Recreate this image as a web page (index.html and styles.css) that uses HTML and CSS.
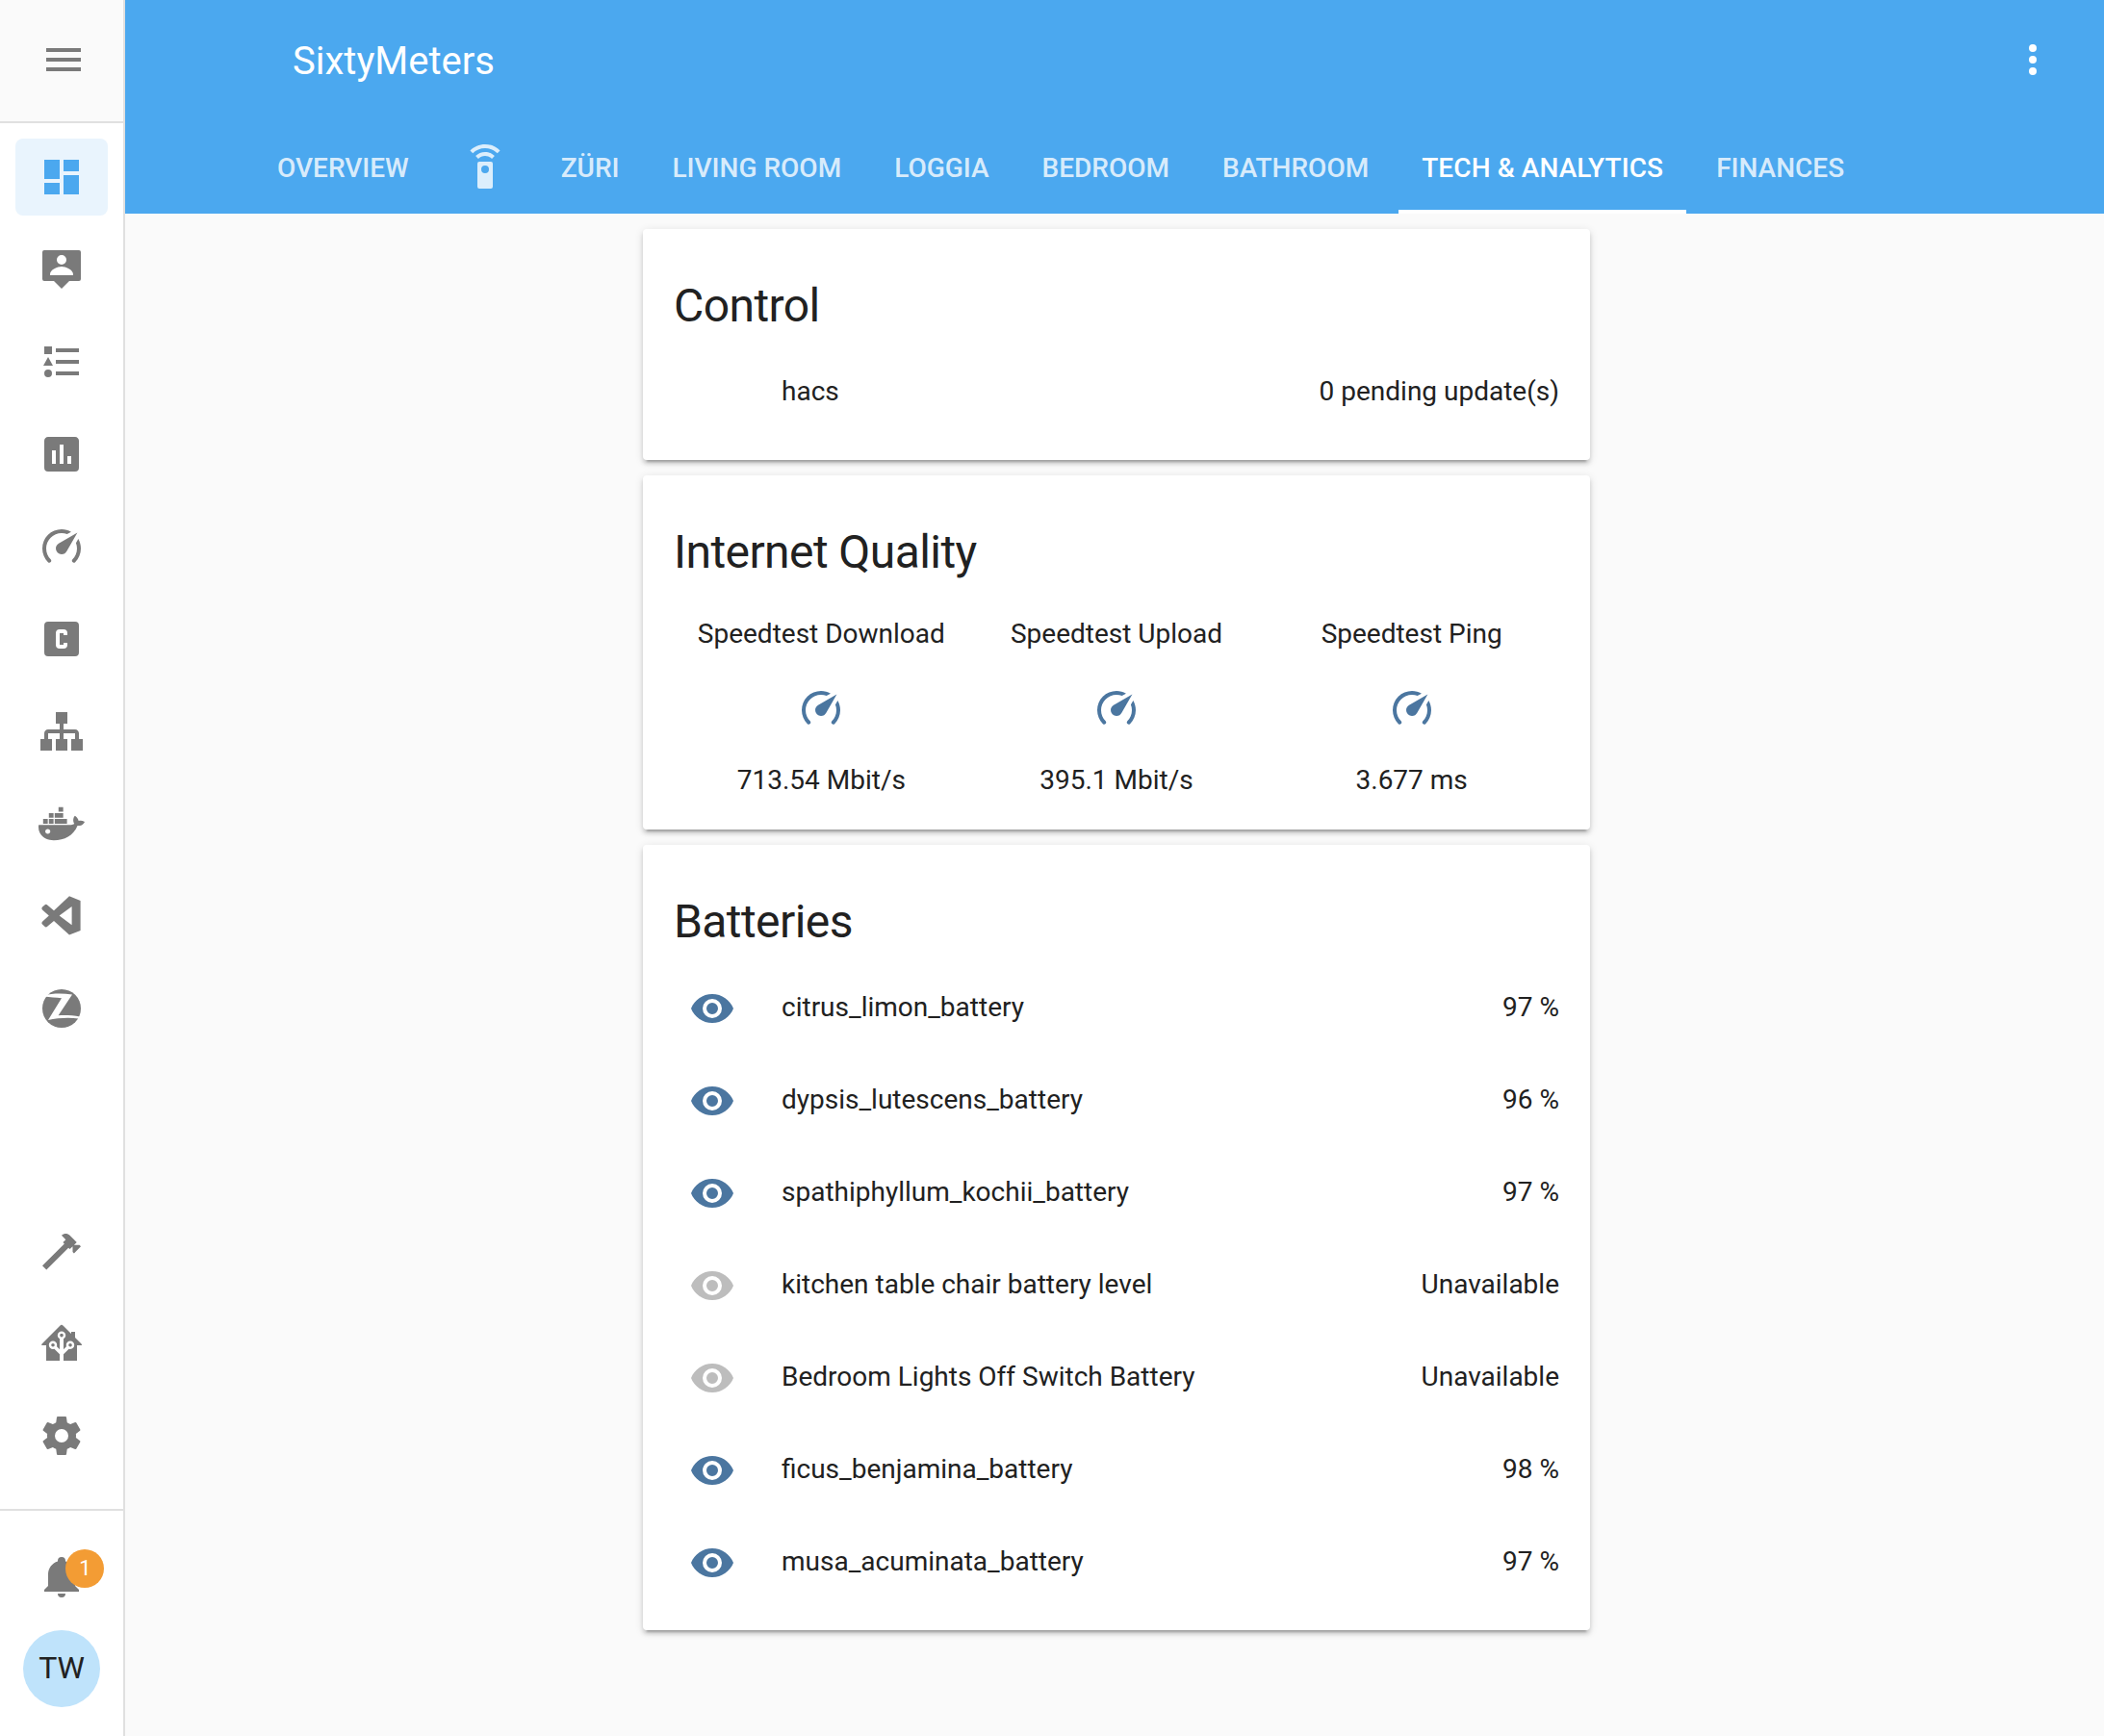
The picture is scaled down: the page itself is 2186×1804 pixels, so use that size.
FILE: index.html
```html
<!DOCTYPE html>
<html lang="en">
<head>
    <meta charset="UTF-8">
    <meta name="viewport" content="width=device-width, initial-scale=1.0">
    <title>SixtyMeters</title>
    <link rel="stylesheet" href="styles.css">
</head>
<body>

    <!-- Shared icons -->
    <svg class="sprite" aria-hidden="true">
        <symbol id="i-eye" viewBox="0 0 24 24"><path d="M12,9A3,3 0 0,0 9,12A3,3 0 0,0 12,15A3,3 0 0,0 15,12A3,3 0 0,0 12,9M12,17A5,5 0 0,1 7,12A5,5 0 0,1 12,7A5,5 0 0,1 17,12A5,5 0 0,1 12,17M12,4.5C7,4.5 2.73,7.61 1,12C2.73,16.39 7,19.5 12,19.5C17,19.5 21.27,16.39 23,12C21.27,7.61 17,4.5 12,4.5Z"/></symbol>
        <symbol id="i-speed" viewBox="0 0 24 24"><path d="M12,16A3,3 0 0,1 9,13C9,11.88 9.61,10.9 10.5,10.39L20.21,4.77L14.68,14.35C14.18,15.33 13.17,16 12,16M12,3C13.81,3 15.5,3.5 16.97,4.32L14.87,5.53C14,5.19 13,5 12,5A8,8 0 0,0 4,13C4,15.21 4.89,17.21 6.34,18.65H6.35C6.74,19.04 6.74,19.67 6.35,20.06C5.96,20.45 5.32,20.45 4.93,20.07V20.07C3.12,18.26 2,15.76 2,13A10,10 0 0,1 12,3M22,13C22,15.76 20.88,18.26 19.07,20.07V20.07C18.68,20.45 18.05,20.45 17.66,20.06C17.27,19.67 17.27,19.04 17.66,18.65V18.65C19.11,17.2 20,15.21 20,13C20,12 19.81,11 19.46,10.1L20.67,8C21.5,9.5 22,11.18 22,13Z"/></symbol>
    </svg>

    <!-- Sidebar -->
    <aside class="sidebar">
        <div class="menu">
            <svg class="icon" viewBox="0 0 24 24"><path d="M3,6H21V8H3V6M3,11H21V13H3V11M3,16H21V18H3V16Z"/></svg>
        </div>
        <nav class="nav">
            <a class="nav-item active"><svg class="icon" viewBox="0 0 24 24"><path d="M13,3V9H21V3M13,21H21V11H13M3,21H11V15H3M3,13H11V3H3V13Z"/></svg></a>
            <a class="nav-item"><svg class="icon" viewBox="0 0 24 24"><path fill-rule="evenodd" d="M3 2H21A1 1 0 0 1 22 3V17A1 1 0 0 1 21 18H16L12 22L8 18H3A1 1 0 0 1 2 17V3A1 1 0 0 1 3 2ZM12 4.5A2.5 2.5 0 1 0 12 9.5A2.5 2.5 0 1 0 12 4.5ZM6 15H18V14.5C18 12 14 10.5 12 10.5C10 10.5 6 12 6 14.5Z"/></svg></a>
            <a class="nav-item"><svg class="icon" viewBox="0 0 24 24"><path d="M3 4H7V8H3ZM9 5H21V7H9ZM5 9.5L7.5 14H2.5ZM9 11H21V13H9ZM5 16A2 2 0 1 1 5 20A2 2 0 1 1 5 16ZM9 17H21V19H9Z"/></svg></a>
            <a class="nav-item"><svg class="icon" viewBox="0 0 24 24"><path d="M17,17H15V13H17M13,17H11V7H13M9,17H7V10H9M19,3H5C3.89,3 3,3.89 3,5V19A2,2 0 0,0 5,21H19A2,2 0 0,0 21,19V5C21,3.89 20.1,3 19,3Z"/></svg></a>
            <a class="nav-item"><svg class="icon"><use href="#i-speed"/></svg></a>
            <a class="nav-item"><svg class="icon" viewBox="0 0 24 24"><path fill-rule="evenodd" d="M11,7A2,2 0 0,0 9,9V15A2,2 0 0,0 11,17H13A2,2 0 0,0 15,15V14H13V15H11V9H13V10H15V9A2,2 0 0,0 13,7H11M5,3H19A2,2 0 0,1 21,5V19A2,2 0 0,1 19,21H5A2,2 0 0,1 3,19V5A2,2 0 0,1 5,3Z"/></svg></a>
            <a class="nav-item"><svg class="icon" viewBox="0 0 24 24"><path d="M9,2V8H11V11H5C3.89,11 3,11.89 3,13V16H1V22H7V16H5V13H11V16H9V22H15V16H13V13H19V16H17V22H23V16H21V13C21,11.89 20.11,11 19,11H13V8H15V2H9Z"/></svg></a>
            <a class="nav-item"><svg class="icon" viewBox="0 0 24 24"><path d="M4.82,17.275c-.684,0-1.304-.56-1.304-1.24s.56-1.243,1.305-1.243c.748,0,1.31.56,1.31,1.242s-.622,1.24-1.31,1.24zm16.012-6.763c-.135-.992-.75-1.8-1.56-2.42l-.315-.25-.254.31c-.494.56-.69 1.553-.63 2.295.06.562.24 1.12.554 1.554-.25.14-.557.25-.81.37-.57.188-1.124.25-1.68.25H.097l-.06.37c-.12 1.182.06 2.42.562 3.54l.244.435v.06c1.5 2.483 4.17 3.6 7.078 3.6 5.594 0 10.182-2.42 12.357-7.633 1.425.062 2.864-.31 3.54-1.676l.18-.31-.3-.187c-.81-.494-1.92-.56-2.85-.31l-.018.002zm-8.008-.992h-2.428v2.42h2.43V9.518l-.002.003zm0-3.043h-2.428v2.42h2.43V6.48l-.002-.002zm0-3.104h-2.428v2.42h2.43v-2.42h-.002zm2.97 6.147H12.39v2.42h2.42V9.518zm-8.998 0H5.39v2.42h2.42v-2.42zm3.03 0H8.41v2.42h2.42v-2.42zm-6.03 0H2.4v2.42h2.428v-2.42zm6.03-3.043H8.41v2.42h2.42v-2.42zm-3.03 0H5.39v2.42h2.42v-2.42z"/></svg></a>
            <a class="nav-item"><svg class="icon" viewBox="0 0 24 24"><path fill-rule="evenodd" d="M17.3 16.6V7L10.8 11.8ZM16 1.6L21.8 4V19.5L16 21.8L8 14.5L4.6 17.4C4.2 17.8 3.6 17.8 3.2 17.4L2 16.3C1.6 15.9 1.6 15.3 2 14.9L5.4 11.8L2 8.7C1.6 8.3 1.6 7.7 2 7.3L3.2 6.2C3.6 5.8 4.2 5.8 4.6 6.2L8 9.1Z"/></svg></a>
            <a class="nav-item"><svg class="icon" viewBox="0 0 24 24"><circle cx="12" cy="12" r="10"/><path class="cutout" d="M3 5.2C7 4.2 12 4 17.5 4.8L10.3 15.6C14 15.4 18 15.6 21.5 16.2L20.8 17.2C16 16.6 10 16.8 5 18L12 6.6C9 6.4 6 6.3 3 5.8Z"/></svg></a>
        </nav>
        <div class="tools">
            <a class="tool-item"><svg class="icon" viewBox="0 0 24 24"><path d="M2 19.63L13.43 8.2L12.72 7.5L14.14 6.07L12 3.89C13.2 2.7 15.09 2.7 16.27 3.89L19.87 7.5L18.45 8.91H21.29L22 9.62L18.45 13.21L17.74 12.5V9.62L16.27 11.04L15.56 10.33L4.13 21.76L2 19.63Z"/></svg></a>
            <a class="tool-item"><svg class="icon" viewBox="0 0 24 24"><path d="M21.8,13H20V21H13V17.67L15.79,14.88L16.5,15C17.66,15 18.6,14.06 18.6,12.9C18.6,11.74 17.66,10.8 16.5,10.8A2.1,2.1 0 0,0 14.4,12.9L14.5,13.61L13,15.13V9.65C13.66,9.29 14.1,8.6 14.1,7.8A2.1,2.1 0 0,0 12,5.7A2.1,2.1 0 0,0 9.9,7.8C9.9,8.6 10.34,9.29 11,9.65V15.13L9.5,13.61L9.6,12.9A2.1,2.1 0 0,0 7.5,10.8A2.1,2.1 0 0,0 5.4,12.9A2.1,2.1 0 0,0 7.5,15L8.21,14.88L11,17.67V21H4V13H2.25C1.83,13 1.42,13 1.42,12.79C1.43,12.57 1.85,12.15 2.28,11.72L11,3C11.33,2.67 11.67,2.33 12,2.33C12.33,2.33 12.67,2.67 13,3L17,7V6H19V9L21.78,11.78C22.17,12.17 22.56,12.56 22.56,12.78C22.56,13 22.18,13 21.8,13M7.5,12A0.9,0.9 0 0,1 8.4,12.9A0.9,0.9 0 0,1 7.5,13.8A0.9,0.9 0 0,1 6.6,12.9A0.9,0.9 0 0,1 7.5,12M16.5,12C17,12 17.4,12.4 17.4,12.9C17.4,13.4 17,13.8 16.5,13.8A0.9,0.9 0 0,1 15.6,12.9A0.9,0.9 0 0,1 16.5,12M12,6.9C12.5,6.9 12.9,7.3 12.9,7.8C12.9,8.3 12.5,8.7 12,8.7C11.5,8.7 11.1,8.3 11.1,7.8C11.1,7.3 11.5,6.9 12,6.9Z"/></svg></a>
            <a class="tool-item"><svg class="icon" viewBox="0 0 24 24"><path d="M12,15.5A3.5,3.5 0 0,1 8.5,12A3.5,3.5 0 0,1 12,8.5A3.5,3.5 0 0,1 15.5,12A3.5,3.5 0 0,1 12,15.5M19.43,12.97C19.47,12.65 19.5,12.33 19.5,12C19.5,11.67 19.47,11.34 19.43,11L21.54,9.37C21.73,9.22 21.78,8.95 21.66,8.73L19.66,5.27C19.54,5.05 19.27,4.96 19.05,5.05L16.56,6.05C16.04,5.66 15.5,5.32 14.87,5.07L14.5,2.42C14.46,2.18 14.25,2 14,2H10C9.75,2 9.54,2.18 9.5,2.42L9.13,5.07C8.5,5.32 7.96,5.66 7.44,6.05L4.95,5.05C4.73,4.96 4.46,5.05 4.34,5.27L2.34,8.73C2.21,8.95 2.27,9.22 2.46,9.37L4.57,11C4.53,11.34 4.5,11.67 4.5,12C4.5,12.33 4.53,12.65 4.57,12.97L2.46,14.63C2.27,14.78 2.21,15.05 2.34,15.27L4.34,18.73C4.46,18.95 4.73,19.03 4.95,18.95L7.44,17.94C7.96,18.34 8.5,18.68 9.13,18.93L9.5,21.58C9.54,21.82 9.75,22 10,22H14C14.25,22 14.46,21.82 14.5,21.58L14.87,18.93C15.5,18.67 16.04,18.34 16.56,17.94L19.05,18.95C19.27,19.03 19.54,18.95 19.66,18.73L21.66,15.27C21.78,15.05 21.73,14.78 21.54,14.63L19.43,12.97Z"/></svg></a>
        </div>
        <div class="account">
            <div class="bell">
                <svg class="icon" viewBox="0 0 24 24"><path d="M21,19V20H3V19L5,17V11C5,7.9 7.03,5.17 10,4.29C10,4.19 10,4.1 10,4A2,2 0 0,1 12,2A2,2 0 0,1 14,4C14,4.1 14,4.19 14,4.29C16.97,5.17 19,7.9 19,11V17L21,19M14,21A2,2 0 0,1 12,23A2,2 0 0,1 10,21"/></svg>
                <span class="badge">1</span>
            </div>
            <div class="avatar">TW</div>
        </div>
    </aside>

    <div class="main">
        <!-- Header and tabs -->
        <header class="header">
            <div class="toolbar">
                <div class="title">SixtyMeters</div>
                <svg class="icon kebab" viewBox="0 0 24 24"><path d="M12,16A2,2 0 0,1 14,18A2,2 0 0,1 12,20A2,2 0 0,1 10,18A2,2 0 0,1 12,16M12,10A2,2 0 0,1 14,12A2,2 0 0,1 12,14A2,2 0 0,1 10,12A2,2 0 0,1 12,10M12,4A2,2 0 0,1 14,6A2,2 0 0,1 12,8A2,2 0 0,1 10,6A2,2 0 0,1 12,4Z"/></svg>
            </div>
            <div class="tabs">
                <a class="tab">Overview</a>
                <a class="tab"><svg class="icon" viewBox="0 0 24 24"><path d="M12,0C8.96,0 6.21,1.23 4.22,3.22L5.63,4.63C7.26,3 9.5,2 12,2C14.5,2 16.74,3 18.36,4.64L19.77,3.23C17.79,1.23 15.04,0 12,0M7.05,6.05L8.46,7.46C9.37,6.56 10.62,6 12,6C13.38,6 14.63,6.56 15.54,7.46L16.95,6.05C15.68,4.78 13.93,4 12,4C10.07,4 8.32,4.78 7.05,6.05M12,15A2,2 0 0,1 10,13A2,2 0 0,1 12,11A2,2 0 0,1 14,13A2,2 0 0,1 12,15M15,9H9A1,1 0 0,0 8,10V22A1,1 0 0,0 9,23H15A1,1 0 0,0 16,22V10A1,1 0 0,0 15,9Z"/></svg></a>
                <a class="tab">Züri</a>
                <a class="tab">Living Room</a>
                <a class="tab">Loggia</a>
                <a class="tab">Bedroom</a>
                <a class="tab">Bathroom</a>
                <a class="tab active">Tech &amp; Analytics</a>
                <a class="tab">Finances</a>
            </div>
        </header>

        <!-- Cards -->
        <main class="content">
            <div class="column">
                <section class="card">
                    <h2 class="card-title">Control</h2>
                    <div class="rows">
                        <div class="row">
                            <span class="row-icon"></span>
                            <span class="row-name">hacs</span>
                            <span class="row-value">0 pending update(s)</span>
                        </div>
                    </div>
                </section>

                <section class="card">
                    <h2 class="card-title">Internet Quality</h2>
                    <div class="glance">
                        <div class="glance-item">
                            <div class="glance-name">Speedtest Download</div>
                            <svg class="icon state"><use href="#i-speed"/></svg>
                            <div class="glance-value">713.54 Mbit/s</div>
                        </div>
                        <div class="glance-item">
                            <div class="glance-name">Speedtest Upload</div>
                            <svg class="icon state"><use href="#i-speed"/></svg>
                            <div class="glance-value">395.1 Mbit/s</div>
                        </div>
                        <div class="glance-item">
                            <div class="glance-name">Speedtest Ping</div>
                            <svg class="icon state"><use href="#i-speed"/></svg>
                            <div class="glance-value">3.677 ms</div>
                        </div>
                    </div>
                </section>

                <section class="card">
                    <h2 class="card-title">Batteries</h2>
                    <div class="rows">
                        <div class="row">
                            <span class="row-icon"><svg class="icon state"><use href="#i-eye"/></svg></span>
                            <span class="row-name">citrus_limon_battery</span>
                            <span class="row-value">97 %</span>
                        </div>
                        <div class="row">
                            <span class="row-icon"><svg class="icon state"><use href="#i-eye"/></svg></span>
                            <span class="row-name">dypsis_lutescens_battery</span>
                            <span class="row-value">96 %</span>
                        </div>
                        <div class="row">
                            <span class="row-icon"><svg class="icon state"><use href="#i-eye"/></svg></span>
                            <span class="row-name">spathiphyllum_kochii_battery</span>
                            <span class="row-value">97 %</span>
                        </div>
                        <div class="row">
                            <span class="row-icon"><svg class="icon off"><use href="#i-eye"/></svg></span>
                            <span class="row-name">kitchen table chair battery level</span>
                            <span class="row-value">Unavailable</span>
                        </div>
                        <div class="row">
                            <span class="row-icon"><svg class="icon off"><use href="#i-eye"/></svg></span>
                            <span class="row-name">Bedroom Lights Off Switch Battery</span>
                            <span class="row-value">Unavailable</span>
                        </div>
                        <div class="row">
                            <span class="row-icon"><svg class="icon state"><use href="#i-eye"/></svg></span>
                            <span class="row-name">ficus_benjamina_battery</span>
                            <span class="row-value">98 %</span>
                        </div>
                        <div class="row">
                            <span class="row-icon"><svg class="icon state"><use href="#i-eye"/></svg></span>
                            <span class="row-name">musa_acuminata_battery</span>
                            <span class="row-value">97 %</span>
                        </div>
                    </div>
                </section>
            </div>
        </main>
    </div>

</body>
</html>
```

FILE: styles.css
```css
html, body {
    height: 100%;
}
body {
    display: flex;
    margin: 0;
    overflow: hidden;
    background: #fafafa;
    color: #212121;
    font-family: Roboto, "Liberation Sans", sans-serif;
    font-size: 28px;
}
.sprite {
    display: none;
}
.icon {
    display: block;
    flex: none;
    width: 48px;
    height: 48px;
    fill: #7a7a7a;
}

/* Sidebar */
.sidebar {
    display: flex;
    flex-direction: column;
    flex: none;
    box-sizing: border-box;
    width: 130px;
    height: 100%;
    background: #fff;
    border-right: 2px solid #e0e0e0;
}
.menu {
    display: flex;
    align-items: center;
    box-sizing: border-box;
    height: 128px;
    padding: 0 0 2px 42px;
    background: #fafafa;
    border-bottom: 2px solid #e0e0e0;
}
.nav {
    padding: 16px 0 0 16px;
}
.nav-item {
    display: flex;
    align-items: center;
    justify-content: center;
    width: 96px;
    height: 80px;
    margin-bottom: 16px;
    border-radius: 8px;
}
.nav-item.active {
    background: #e9f4fd;
}
.nav-item.active .icon {
    fill: #4ba8ef;
}
.cutout {
    fill: #fff;
}
.tools {
    margin-top: auto;
    padding: 0 0 36px 16px;
}
.tool-item {
    display: flex;
    align-items: center;
    justify-content: center;
    width: 96px;
    height: 80px;
    margin-bottom: 16px;
}
.tool-item:last-child {
    margin-bottom: 0;
}
.account {
    padding: 44px 0 30px 24px;
    border-top: 2px solid #e0e0e0;
}
.bell {
    position: relative;
    width: 48px;
    margin-left: 16px;
}
.badge {
    position: absolute;
    top: -4px;
    left: 28px;
    width: 40px;
    height: 40px;
    padding-left: 1px;
    box-sizing: border-box;
    border-radius: 50%;
    background: #f39c34;
    color: #fff;
    font-size: 22px;
    line-height: 40px;
    text-align: center;
}
.avatar {
    width: 80px;
    height: 80px;
    margin-top: 32px;
    border-radius: 50%;
    background: #bfe3fb;
    font-size: 32px;
    line-height: 78px;
    text-align: center;
}

/* Header */
.main {
    display: flex;
    flex-direction: column;
    flex: 1;
    min-width: 0;
}
.header {
    flex: none;
    height: 222px;
    background: #4ba8ef;
    color: #fff;
}
.toolbar {
    display: flex;
    align-items: center;
    justify-content: space-between;
    height: 126px;
    padding: 0 50px 0 174px;
    box-sizing: border-box;
}
.title {
    font-size: 40px;
}
.kebab {
    fill: #fff;
    margin-bottom: 2px;
}
.tabs {
    display: flex;
    gap: 7px;
    height: 96px;
    padding-left: 134px;
}
.tab {
    display: flex;
    align-items: center;
    position: relative;
    padding: 0 24px;
    font-weight: 500;
    text-transform: uppercase;
    color: rgba(255, 255, 255, 0.8);
}
.tab .icon {
    fill: rgba(255, 255, 255, 0.8);
}
.tab.active {
    color: #fff;
    letter-spacing: 0.1px;
}
.tab.active::after {
    content: "";
    position: absolute;
    left: 0;
    right: 0;
    bottom: 0;
    height: 4px;
    background: #fff;
}

/* Cards */
.content {
    display: flex;
    justify-content: center;
    padding: 16px 0 0 4px;
}
.column {
    display: flex;
    flex-direction: column;
    gap: 16px;
    width: 984px;
}
.card {
    padding: 0 32px 32px;
    background: #fff;
    border-radius: 4px;
    box-shadow: 0 4px 4px 0 rgba(0, 0, 0, 0.14), 0 2px 10px 0 rgba(0, 0, 0, 0.12), 0 6px 2px -4px rgba(0, 0, 0, 0.2);
}
.card-title {
    height: 128px;
    margin: 0;
    box-sizing: border-box;
    padding-top: 48px;
    font-size: 48px;
    font-weight: 400;
    letter-spacing: -0.576px;
    line-height: 64px;
}
.rows {
    display: flex;
    flex-direction: column;
    gap: 16px;
}
.row {
    display: flex;
    align-items: center;
    height: 80px;
}
.row-icon {
    display: flex;
    align-items: center;
    justify-content: center;
    flex: none;
    box-sizing: border-box;
    width: 80px;
    height: 80px;
    padding-top: 4px;
    margin-right: 32px;
}
.row-name {
    flex: 1;
}
.state {
    fill: #4b76a0;
}
.off {
    fill: #bdbdbd;
}

/* Glance */
.glance {
    display: grid;
    grid-template-columns: repeat(3, 1fr);
    padding-top: 16px;
    margin-bottom: -2px;
}
.glance-item {
    display: flex;
    flex-direction: column;
    align-items: center;
}
.glance-name {
    line-height: 42px;
    margin-bottom: 32px;
}
.glance-value {
    line-height: 42px;
    margin-top: 30px;
}
```
